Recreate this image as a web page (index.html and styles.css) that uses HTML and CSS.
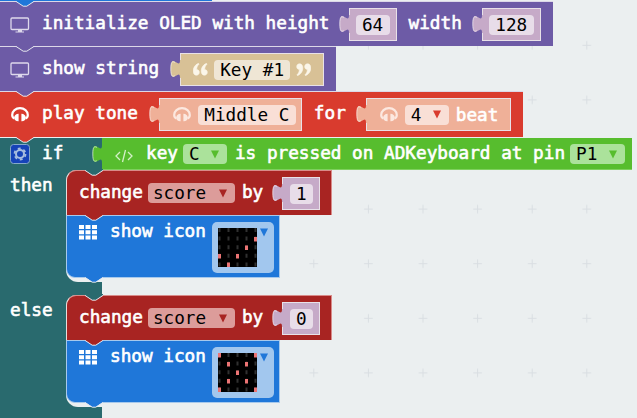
FILE: index.html
```html
<!DOCTYPE html>
<html lang="en">
<head>
<meta charset="utf-8">
<title>Blocks</title>
<link rel="stylesheet" href="styles.css">
</head>
<body>
<svg class="defs" width="0" height="0" aria-hidden="true">
  <symbol id="notch" viewBox="0 0 20 8"><path class="notch-fill" d="M1 0V1.2L8.2 6H11.8L19 1.2V0Z"/><path class="notch-line" d="M1 1.4L8.2 6.2H11.8L19 1.4"/></symbol>
  <symbol id="tab" viewBox="0 0 11 20"><path class="tab-fill" d="M11 1H10c0 11-9.3-9-9.3 9s9.3-2 9.3 9h1z"/><path class="tab-line" d="M5 3.3C2 2 .8 3 .8 10s1.200 8 4 6.800"/></symbol>
  <symbol id="monitor" viewBox="0 0 20 16"><rect x="1" y="1" width="17.500" height="11.500" rx="1" fill="none" stroke="currentColor" stroke-width="1.300"/><path d="M8 13h4v1.500h2v1H5.500v-1H8z" fill="currentColor"/></symbol>
  <symbol id="phones" viewBox="0 0 18 15"><path d="M3.400 11.500C1.500 10.800 1.200 9.500 1.200 8a7.800 6.800 0 0 1 15.600 0c0 1.500-.3 2.800-2.200 3.500" fill="none" stroke="currentColor" stroke-width="2.200"/><path d="M7.600 6.800v7.500C5 14.500 3.200 13 3.200 10.700S5 6.900 7.600 6.800zM10.400 6.800v7.500c2.600.2 4.400-1.300 4.400-3.600s-1.800-3.800-4.400-3.900z" fill="currentColor"/></symbol>
  <symbol id="grid" viewBox="0 0 18 15"><path d="M0 0h5v4H0zM6.500 0h5v4h-5zM13 0h5v4h-5zM0 5.200h5v4H0zM6.500 5.200h5v4h-5zM13 5.200h5v4h-5zM0 10.400h5v4H0zM6.500 10.400h5v4h-5zM13 10.400h5v4h-5z" fill="currentColor"/></symbol>
  <symbol id="quote" viewBox="0 0 15 13"><path d="M5.500.3C2 1.700.2 4.700.2 8c0 2.600 1.200 4.200 3.200 4.200 1.700 0 2.900-1.200 2.900-2.900 0-1.600-1.100-2.700-2.700-2.700C3.700 4.300 4.500 2.500 6 1.200zM13.500.3C10 1.700 8.200 4.700 8.200 8c0 2.600 1.200 4.200 3.200 4.200 1.700 0 2.900-1.200 2.900-2.900 0-1.600-1.100-2.700-2.700-2.700.1-2.300.9-4.100 2.400-5.400z" fill="currentColor" stroke="currentColor" stroke-width=".6"/></symbol>
  <symbol id="arrow" viewBox="0 0 8 9"><path d="M0 .5h8L4 8.500z" fill="currentColor"/></symbol>
</svg>

<svg class="backdrop" width="637" height="418" aria-hidden="true">
  <defs><pattern id="crosses" x="13.500" y="18" width="54.600" height="54.600" patternUnits="userSpaceOnUse"><path d="M23 27.300h8.600M27.300 23v8.600" stroke="#d9dee2" stroke-width="1"/></pattern></defs>
  <rect width="637" height="418" fill="url(#crosses)"/>
</svg>

<main class="stack">
  <div class="above"></div>

  <section class="block oled init">
    <svg class="notch blue-notch"><use href="#notch"/></svg>
    <svg class="icon monitor"><use href="#monitor"/></svg>
    <span class="label">initialize OLED with height</span>
    <div class="value number w64"><svg class="tab"><use href="#tab"/></svg><span class="pill">64</span></div>
    <span class="label after">width</span>
    <div class="value number w128"><svg class="tab"><use href="#tab"/></svg><span class="pill">128</span></div>
  </section>

  <section class="block oled show">
    <svg class="notch oled-notch"><use href="#notch"/></svg>
    <svg class="icon monitor"><use href="#monitor"/></svg>
    <span class="label">show string</span>
    <div class="value string"><svg class="tab"><use href="#tab"/></svg>
      <svg class="quote"><use href="#quote"/></svg><span class="pill">Key #1</span><svg class="quote closing"><use href="#quote"/></svg>
    </div>
  </section>

  <section class="block tone">
    <svg class="notch oled-notch"><use href="#notch"/></svg>
    <svg class="icon phones lead"><use href="#phones"/></svg>
    <span class="label">play tone</span>
    <div class="value note"><svg class="tab"><use href="#tab"/></svg><svg class="phones"><use href="#phones"/></svg><span class="pill">Middle C</span></div>
    <span class="label after">for</span>
    <div class="value beat"><svg class="tab"><use href="#tab"/></svg><svg class="phones"><use href="#phones"/></svg><span class="pill select">4<svg class="arrow"><use href="#arrow"/></svg></span><span class="label">beat</span></div>
  </section>

  <section class="branch">
    <svg class="notch tone-notch"><use href="#notch"/></svg>
    <div class="condition">
      <div class="head">
        <svg class="gear" viewBox="0 0 20 20"><rect x=".5" y=".5" width="19" height="19" rx="3" fill="#1643b8" stroke="#86a9c9"/><g fill="none" stroke="#a7bddf"><circle cx="10" cy="10" r="4" stroke-width="2"/><circle cx="10" cy="10" r="5.500" stroke-width="1.800" stroke-dasharray="2.880 2.880"/></g></svg>
        <span class="label">if</span>
      </div>
      <div class="test">
        <svg class="tab"><use href="#tab"/></svg>
        <svg class="code" viewBox="0 0 18 14"><path d="M5 3L1 7l4 4M13 3l4 4-4 4M10.500 1l-3 12" fill="none" stroke="currentColor" stroke-width="1.300"/></svg>
        <span class="label">key</span>
        <span class="pill select key">C<svg class="arrow"><use href="#arrow"/></svg></span>
        <span class="label">is pressed on ADKeyboard at pin</span>
        <span class="pill select pin">P1<svg class="arrow"><use href="#arrow"/></svg></span>
      </div>
    </div>

    <div class="arm">
      <span class="label side">then</span>
      <div class="body">
        <div class="block change">
          <svg class="notch teal-notch"><use href="#notch"/></svg>
          <span class="label">change</span>
          <span class="pill select var">score<svg class="arrow"><use href="#arrow"/></svg></span>
          <span class="label">by</span>
          <div class="value number w1"><svg class="tab"><use href="#tab"/></svg><span class="pill">1</span></div>
        </div>
        <div class="block leds">
          <svg class="notch change-notch"><use href="#notch"/></svg>
          <svg class="grid"><use href="#grid"/></svg>
          <span class="label">show icon</span>
          <div class="picker">
            <svg class="matrix" viewBox="0 0 39 39"><rect width="39" height="39"/><path class="off" d="M1.500 0v39M10.500 0v39M19.500 0v39M28.500 0v39M37.500 0v39"/><path class="on" d="M37.500 9v4.500M28.500 17.500v4.500M1.500 26v4.500M19.500 26v4.500M10.500 34.500v4.500"/></svg>
            <svg class="arrow"><use href="#arrow"/></svg>
          </div>
          <svg class="notch tail"><use href="#notch"/></svg>
        </div>
      </div>
    </div>
    <div class="spacer"></div>

    <div class="arm">
      <span class="label side">else</span>
      <div class="body">
        <div class="block change">
          <svg class="notch teal-notch"><use href="#notch"/></svg>
          <span class="label">change</span>
          <span class="pill select var">score<svg class="arrow"><use href="#arrow"/></svg></span>
          <span class="label">by</span>
          <div class="value number w1"><svg class="tab"><use href="#tab"/></svg><span class="pill">0</span></div>
        </div>
        <div class="block leds">
          <svg class="notch change-notch"><use href="#notch"/></svg>
          <svg class="grid"><use href="#grid"/></svg>
          <span class="label">show icon</span>
          <div class="picker">
            <svg class="matrix" viewBox="0 0 39 39"><rect width="39" height="39"/><path class="off" d="M1.500 0v39M10.500 0v39M19.500 0v39M28.500 0v39M37.500 0v39"/><path class="on" d="M1.500 0v4.500M37.500 0v4.500M10.500 9v4.500M28.500 9v4.500M19.500 17.500v4.500M10.500 26v4.500M28.500 26v4.500M1.500 34.500v4.500M37.500 34.500v4.500"/></svg>
            <svg class="arrow"><use href="#arrow"/></svg>
          </div>
          <svg class="notch tail"><use href="#notch"/></svg>
        </div>
      </div>
    </div>
    <div class="spacer last"></div>
  </section>
</main>
</body>
</html>
```
FILE: styles.css
```css
* { box-sizing: border-box; }
body {
  margin: 0;
  width: 637px;
  height: 418px;
  overflow: hidden;
  position: relative;
  background: #ebeff0;
  color: #fff;
  font: 17.7px/20px "DejaVu Sans Mono", monospace;
}
svg { display: block; flex: none; }
.defs { position: absolute; }
.backdrop { position: absolute; left: 0; top: 0; }
.stack { position: relative; display: flex; flex-direction: column; align-items: flex-start; }
.above { width: 212px; height: 1px; background: #1f77d9; }

.block {
  position: relative;
  display: flex;
  align-items: flex-start;
  flex: none;
  border-top: 1px solid #dcd8e8;
}
.label { white-space: pre; flex: none; -webkit-text-stroke: 0.6px #fff; }
.block > .label { margin-top: 11px; }
.block > .label.after { margin-left: 12px; }

.notch { position: absolute; left: 15px; top: -2px; width: 20px; height: 8px; z-index: 1; }
.notch-fill { fill: currentColor; }
.notch-line { fill: none; stroke: #e6e9ef; stroke-width: 1; }
.blue-notch, .tail { color: #1f77d9; }
.oled-notch { color: #6d5ba6; }
.tone-notch { color: #d93b2e; }
.teal-notch { color: #296a6e; }
.change-notch { color: #a82422; }

.oled { background: #6d5ba6; }
.init { width: 553px; height: 45px; }
.show { width: 336px; height: 45px; }
.tone { width: 523px; height: 46px; background: #d93b2e; }
.icon.monitor { width: 20px; height: 16px; margin: 15px 12px 0 10px; color: #ded9ec; }
.phones { width: 18px; height: 15px; }
.icon.lead { margin: 15px 13px 0 11px; }

.value {
  position: relative;
  display: flex;
  align-items: center;
  flex: none;
  height: 33px;
  margin: 6px 0 0 20px;
  border: 1px solid #e8e1e8;
}
.tab { position: absolute; left: -11px; top: 5px; width: 11px; height: 20px; }
.tab-fill { fill: currentColor; }
.tab-line { fill: none; stroke: #fff; stroke-opacity: .6; }
.number { background: #c6aac8; justify-content: center; }
.number .tab { color: #c6aac8; }
.w64 { width: 48px; margin-left: 19px; }
.w128 { width: 59px; }
.w1 { width: 38px; }
.pill {
  display: flex;
  align-items: center;
  justify-content: center;
  flex: none;
  height: 20px;
  border-radius: 4px;
  background: rgba(255, 255, 255, .6);
  color: #000;
}
.w64 .pill { width: 34px; }
.w128 .pill { width: 45px; }
.w1 .pill { width: 23px; }
.string { width: 144px; margin-left: 21px; padding-left: 12px; background: #d8c196; gap: 6px; }
.string .tab { color: #d8c196; }
.string .pill { width: 76px; }
.quote { width: 15px; height: 13px; color: #fbf6e9; }
.closing { transform: rotate(180deg); }
.note, .beat { background: #efb098; padding-left: 13px; }
.note { width: 143px; margin-left: 21px; }
.beat { width: 145px; }
.note .tab, .beat .tab { color: #efb098; }
.value .phones { color: #fce8e0; margin-right: 7px; }
.note .pill { width: 98px; }
.beat .pill { width: 44px; color: #000; margin-right: 7px; }

.select { justify-content: space-between; padding: 0 8px 0 6px; }
.arrow { width: 8px; height: 9px; }
.beat .arrow { color: #d93b2e; }

.branch { position: relative; width: 637px; border-top: 1px solid transparent; }
.condition { display: flex; height: 32px; }
.head { display: flex; width: 102px; padding: 6px 0 0 10px; background: #296a6e; }
.gear { width: 20px; height: 20px; margin-right: 12px; }
.head .label { margin-top: -1px; }
.test { position: relative; display: flex; width: 530px; height: 32px; padding: 5px 0 0 13px; background: #57bd2e; border-bottom: 1px solid #7fd05f; }
.test .tab { top: 6px; left: -10px; color: #57bd2e; }
.code { width: 18px; height: 14px; margin: 6px 13px 0 0; color: #d3f0c7; }
.test .pill { background: #abe29b; margin-top: 1px; }
.test .arrow { color: #57bd2e; }
.key { width: 44px; margin: 0 8px 0 5px; }
.pin { width: 55px; margin-left: 5px; }

.arm { display: flex; background: linear-gradient(#296a6e, #296a6e) 0 0 / 102px 100% no-repeat; }
.side { width: 66px; height: 112px; padding: 5px 0 0 10px; }
.body {
  width: 271px;
  height: 112px;
  background: #ebeff0;
  border-radius: 10px 0 0 12px;
  background-clip: padding-box;
  width: 36px;
}
.change { width: 266px; height: 45px; padding-left: 12px; background: #a82422; border: 1px solid #d98b89; border-left-color: #e8dcdc; border-bottom: 0; border-top-left-radius: 10px; }
.change > .label { margin-top: 11px; }
.change .var { width: 87px; margin: 12px 7px 0 5px; padding-left: 5px; background: #dc9c9a; }
.change .var .arrow { color: #a82422; }
.change .notch, .leds .notch { left: 17px; }
.change .value { margin-left: 19px; }
.leds { width: 214px; height: 63px; padding-left: 12px; background: #1f77d9; border: 1px solid #a7c9ec; border-bottom-left-radius: 9px; }
.leds > .label { margin-top: 5px; }
.grid { width: 18px; height: 15px; margin: 9px 13px 0 0; }
.picker { display: flex; width: 62px; height: 51px; margin: 6px 0 0 6px; padding: 6px 0 0 6px; gap: 3px; background: #a2c7ee; border-radius: 5px; }
.picker .arrow { color: #1f77d9; }
.matrix { width: 39px; height: 39px; }
.off { fill: none; stroke: #303030; stroke-width: 2; stroke-dasharray: 4 4.600; }
.on { fill: none; stroke: #ec7474; stroke-width: 3; }
.leds .tail { top: 60px; }
.spacer { width: 102px; height: 13px; background: #296a6e; }
.spacer.last { height: 20px; }
```
